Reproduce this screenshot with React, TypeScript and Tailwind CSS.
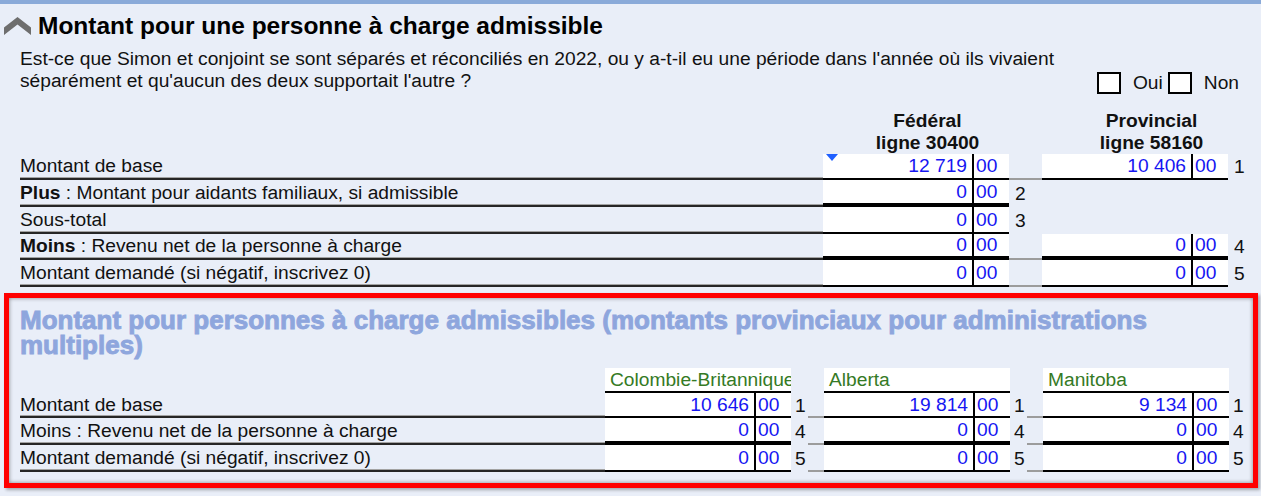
import React from 'react';

// label underline: gray over dark
const LABEL_LINE = 'border-b-2 border-[#262626] shadow-[inset_0_-1px_0_#a3a3a3]';
const GAP_LINE = 'border-b-2 border-[#9c9c9c]';

function Chevron() {
  return (
    <svg width="27" height="18" viewBox="0 0 27 18" className="shrink-0">
      <polygon points="0,10.5 13.5,0 27,10.5 27,18 13.5,7.5 0,18" fill="#6e6e6e" />
    </svg>
  );
}

function AmountBox({ value, thick, marker }: { value: string; thick?: boolean; marker?: boolean }) {
  return (
    <div
      className={`relative flex w-[186px] shrink-0 border-black bg-white text-[#1616f2] ${thick ? 'border-b-4' : 'border-b-2'}`}
    >
      {marker && (
        <svg width="12" height="7" viewBox="0 0 12 7" className="absolute left-[3px] top-0">
          <polygon points="0,0 12,0 6,7" fill="#1f5fff" />
        </svg>
      )}
      <div className="flex w-[151px] items-center justify-end border-r-2 border-black pr-[5px]">{value}</div>
      <div className="flex w-[35px] items-center pl-[2px]">00</div>
    </div>
  );
}

function Checkbox() {
  return <div className="h-[22px] w-[24px] border-2 border-black bg-white" />;
}

type TopRow = {
  label: React.ReactNode;
  fed: string;
  fedThick?: boolean;
  marker?: boolean;
  prov?: string;
  provThick?: boolean;
  n: string;
  h: string;
};

const topRows: TopRow[] = [
  { label: 'Montant de base', fed: '12 719', marker: true, prov: '10 406', n: '1', h: 'h-[26px]' },
  {
    label: (
      <>
        <b>Plus</b>&nbsp;: Montant pour aidants familiaux, si admissible
      </>
    ),
    fed: '0',
    fedThick: true,
    n: '2',
    h: 'h-[27px]',
  },
  { label: 'Sous-total', fed: '0', n: '3', h: 'h-[27px]' },
  {
    label: (
      <>
        <b>Moins</b>&nbsp;: Revenu net de la personne à charge
      </>
    ),
    fed: '0',
    fedThick: true,
    prov: '0',
    provThick: true,
    n: '4',
    h: 'h-[26px]',
  },
  { label: 'Montant demandé (si négatif, inscrivez 0)', fed: '0', prov: '0', n: '5', h: 'h-[27px]' },
];

type MultiRow = { label: string; values: string[]; n: string; thick?: boolean; h: string };

const multiRows: MultiRow[] = [
  { label: 'Montant de base', values: ['10 646', '19 814', '9 134'], n: '1', h: 'h-[25px]' },
  { label: 'Moins : Revenu net de la personne à charge', values: ['0', '0', '0'], n: '4', thick: true, h: 'h-[27px]' },
  { label: 'Montant demandé (si négatif, inscrivez 0)', values: ['0', '0', '0'], n: '5', h: 'h-[27px]' },
];

const provinces = ['Colombie-Britannique', 'Alberta', 'Manitoba'];

export default function App() {
  return (
    <div className="h-[496px] w-[1261px] overflow-hidden border-t-4 border-[#8aaad9] bg-[#e9eef8] font-['Liberation_Sans',Arial,sans-serif] text-[19.2px] leading-[22px] text-[#111]">
      {/* Title */}
      <div className="mt-[8px] flex items-center gap-[7px] pl-[4px]">
        <Chevron />
        <h1 className="text-[24.5px] font-bold leading-[28px] text-black">
          Montant pour une personne à charge admissible
        </h1>
      </div>

      <div className="pl-[20px]">
        {/* Question */}
        <div className="mt-[8px] flex items-end">
          <p className="flex-1">
            Est-ce que Simon et conjoint se sont séparés et réconciliés en 2022, ou y a-t-il eu une période dans
            l'année où ils vivaient
            <br />
            séparément et qu'aucun des deux supportait l'autre ?
          </p>
          <div className="mb-[-2px] mr-[22px] flex items-center">
            <Checkbox />
            <span className="ml-[12px]">Oui</span>
            <div className="ml-[5px]">
              <Checkbox />
            </div>
            <span className="ml-[12px]">Non</span>
          </div>
        </div>

        {/* Column headers */}
        <div className="mt-[18px] flex font-bold">
          <div className="flex-1" />
          <div className="w-[219px] shrink-0 pr-[10px] text-center">
            Fédéral
            <br />
            ligne 30400
          </div>
          <div className="w-[219px] shrink-0 text-center">
            Provincial
            <br />
            ligne 58160
          </div>
        </div>

        {/* Rows */}
        {topRows.map((r, i) => (
          <div key={i} className={`flex ${r.h}`}>
            <div className={`flex min-w-0 flex-1 items-center whitespace-nowrap ${LABEL_LINE}`}>{r.label}</div>
            <AmountBox value={r.fed} thick={r.fedThick} marker={r.marker} />
            {r.prov ? (
              <div className={`w-[33px] shrink-0 ${GAP_LINE}`} />
            ) : (
              <div className="flex w-[33px] shrink-0 items-center pl-[6px]">{r.n}</div>
            )}
            {r.prov ? <AmountBox value={r.prov} thick={r.provThick} /> : <div className="w-[186px] shrink-0" />}
            <div className="flex w-[33px] shrink-0 items-center pl-[6px]">{r.prov ? r.n : ''}</div>
          </div>
        ))}
      </div>

      {/* Multiple jurisdictions */}
      <div className="ml-[4px] mt-[6px] w-[1254px] border-[5px] border-[#ff0000] pb-[11px] pl-[11px] pt-[10px] shadow-[inset_0_0_4px_rgba(0,0,0,0.45),2px_2px_3px_rgba(0,0,0,0.3)]">
        <h2 className="text-[26px] font-bold leading-[25px] text-[#8ea6dd] [-webkit-text-stroke:0.9px_#8ea6dd]">
          Montant pour personnes à charge admissibles (montants provinciaux pour administrations multiples)
        </h2>

        <div className="mt-[10px] flex h-[25px]">
          <div className="flex-1" />
          {provinces.map((p, i) => (
            <React.Fragment key={p}>
              <div className="flex w-[186px] shrink-0 items-center overflow-hidden whitespace-nowrap border-b-2 border-black bg-white pl-[5px] text-[#357a25]">
                {p}
              </div>
              <div className={`shrink-0 ${i < 2 ? 'w-[33px]' : 'w-[24px]'}`} />
            </React.Fragment>
          ))}
        </div>

        {multiRows.map((r, i) => (
          <div key={i} className={`flex ${r.h}`}>
            <div className={`flex min-w-0 flex-1 items-center whitespace-nowrap ${LABEL_LINE}`}>{r.label}</div>
            {r.values.map((v, j) => (
              <React.Fragment key={j}>
                <AmountBox value={v} thick={r.thick} />
                <div className={`flex shrink-0 items-center pl-[4px] ${j < 2 ? 'w-[17px]' : 'w-[24px]'}`}>{r.n}</div>
                {j < 2 && <div className={`w-[16px] shrink-0 ${GAP_LINE}`} />}
              </React.Fragment>
            ))}
          </div>
        ))}
      </div>
    </div>
  );
}
